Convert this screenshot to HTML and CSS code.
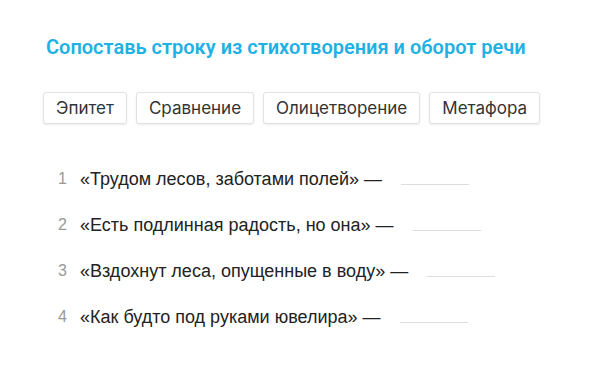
FILE: index.html
```html
<!DOCTYPE html>
<html lang="ru">
<head>
  <meta charset="UTF-8">
  <meta name="viewport" content="width=device-width, initial-scale=1.0">
  <title>Сопоставь строку</title>
  <link rel="stylesheet" href="styles.css">
</head>
<body>
  <div class="task">
    <h1 class="title">Сопоставь строку из стихотворения и оборот речи</h1>

    <div class="options">
      <button class="option">Эпитет</button>
      <button class="option">Сравнение</button>
      <button class="option">Олицетворение</button>
      <button class="option">Метафора</button>
    </div>

    <ol class="lines">
      <li class="line">
        <span class="num">1</span>
        <span class="text">«Трудом лесов, заботами полей» —</span>
        <span class="blank"></span>
      </li>
      <li class="line">
        <span class="num">2</span>
        <span class="text">«Есть подлинная радость, но она» —</span>
        <span class="blank"></span>
      </li>
      <li class="line">
        <span class="num">3</span>
        <span class="text">«Вздохнут леса, опущенные в воду» —</span>
        <span class="blank"></span>
      </li>
      <li class="line">
        <span class="num">4</span>
        <span class="text">«Как будто под руками ювелира» —</span>
        <span class="blank"></span>
      </li>
    </ol>
  </div>
</body>
</html>
```

FILE: styles.css
```css
/* General styling */
body {
  margin: 0;
  background: #fff;
  font-family: "Liberation Sans", Arial, sans-serif;
  color: #222;
}

.task {
  padding: 35px 0 0 46px;
}

/* Title */
.title {
  margin: 0;
  font-family: Roboto, "Noto Sans", sans-serif;
  font-size: 20px;
  font-weight: 600;
  line-height: 24px;
  color: #1fb1e3;
}

/* Answer options */
.options {
  display: flex;
  gap: 9px;
  margin: 33px 0 0 -3px;
}

.option {
  height: 32px;
  padding: 0 12px;
  font-family: Inter, "Noto Sans", sans-serif;
  font-size: 17px;
  color: #333;
  background: #fff;
  border: 1px solid #e2e2e2;
  border-radius: 3px;
  box-shadow: 0 1px 2px rgba(0, 0, 0, 0.08);
  cursor: pointer;
}

/* Poem lines */
.lines {
  list-style: none;
  margin: 44px 0 0 0;
  padding: 0 0 0 12px;
  display: flex;
  flex-direction: column;
  gap: 24px;
}

.line {
  display: flex;
  align-items: center;
  height: 22px;
  font-size: 18px;
}

.num {
  width: 22px;
  color: #999;
  font-size: 16px;
}

.text {
  color: #222;
}

.blank {
  width: 68px;
  height: 10px;
  margin-left: 19px;
  border-bottom: 1px solid #ddd;
}
```
